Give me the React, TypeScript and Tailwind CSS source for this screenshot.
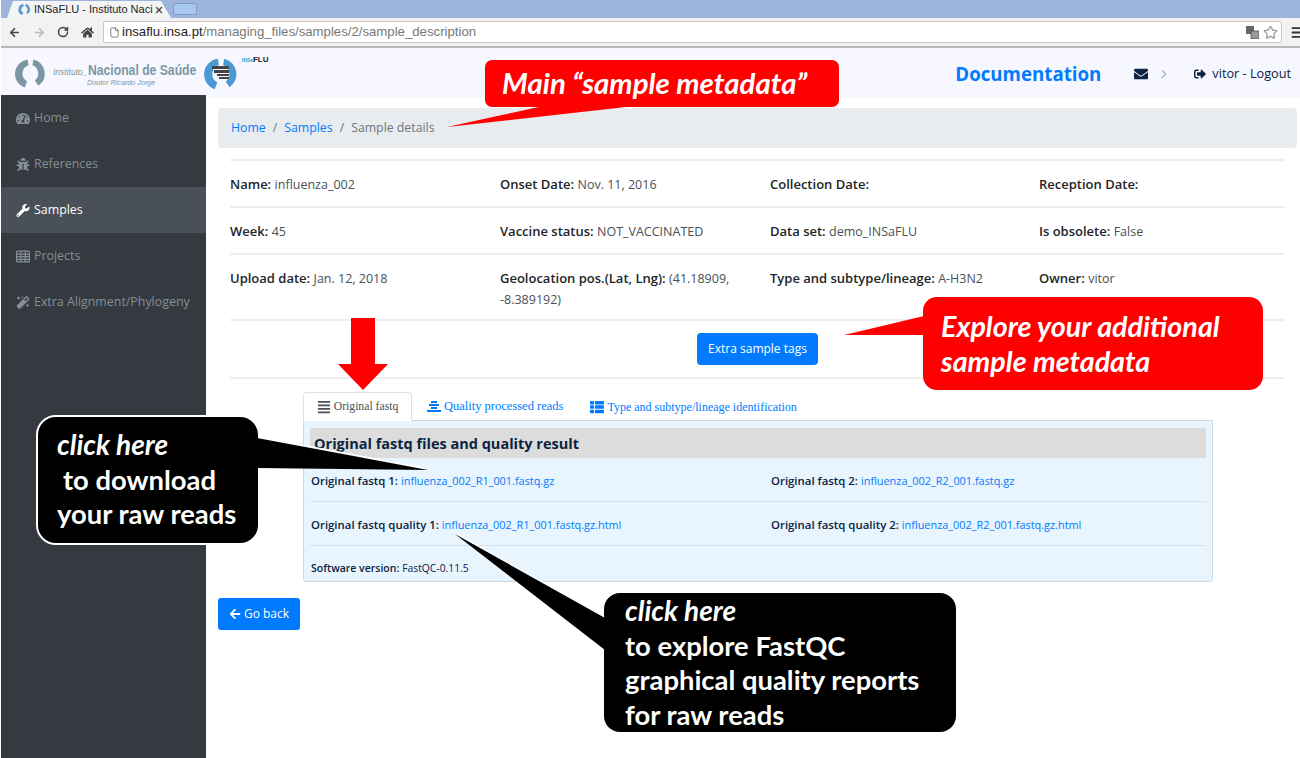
import { ArrowLeft, ArrowRight, RotateCw, File, Star, Menu, X, ChevronRight } from "lucide-react"
import {
  FaAlignJustify,
  FaArrowLeft,
  FaBug,
  FaEnvelope,
  FaHome,
  FaMagic,
  FaSignOutAlt,
  FaTachometerAlt,
  FaThList,
  FaWrench,
} from "react-icons/fa"

function TableIcon({ className }: { size?: number; className?: string }) {
  return (
    <svg viewBox="0 0 14 12" className={className} fill="none" stroke="currentColor" strokeWidth="1.2">
      <rect x="0.6" y="0.6" width="12.8" height="10.8" rx="1" />
      <path d="M0.6 3.6H13.4M0.6 6.2H13.4M0.6 8.8H13.4M4.8 0.6V11.4M9.2 0.6V11.4" />
    </svg>
  )
}

const navItems = [
  { icon: FaTachometerAlt, label: "Home" },
  { icon: FaBug, label: "References" },
  { icon: FaWrench, label: "Samples", active: true },
  { icon: TableIcon, label: "Projects" },
  { icon: FaMagic, label: "Extra Alignment/Phylogeny" },
]

const details = [
  [
    ["Name:", "influenza_002"],
    ["Onset Date:", "Nov. 11, 2016"],
    ["Collection Date:", ""],
    ["Reception Date:", ""],
  ],
  [
    ["Week:", "45"],
    ["Vaccine status:", "NOT_VACCINATED"],
    ["Data set:", "demo_INSaFLU"],
    ["Is obsolete:", "False"],
  ],
  [
    ["Upload date:", "Jan. 12, 2018"],
    ["Geolocation pos.(Lat, Lng):", "(41.18909, -8.389192)"],
    ["Type and subtype/lineage:", "A-H3N2"],
    ["Owner:", "vitor"],
  ],
]

function RingLogo({ color, className }: { color: string; className: string }) {
  return (
    <svg viewBox="0 0 34 34" className={className}>
      <path
        d="M20 2.5 A15 15 0 0 1 25 29.5 L21.5 24 A9 9 0 0 0 19 8.5 Z M14 2.5 L15 8.5 A9 9 0 0 0 13.5 25 L11 31.5 A15 15 0 0 1 14 2.5 Z"
        fill={color}
      />
    </svg>
  )
}

function BrowserChrome() {
  return (
    <div className="h-[48px] shrink-0 flex flex-col font-['Liberation_Sans',sans-serif]">
      <div className="h-[18px] bg-[#9db5dd] flex items-end pl-[6px]">
        <div className="w-[164px] h-[17px] bg-[#f4f4f4] [clip-path:polygon(0_100%,6px_0,154px_0,164px_100%)] flex items-center pl-[11px] pr-[7px] text-[11px] text-[#222]">
          <RingLogo color="#5a9bd5" className="w-[13px] h-[13px] mr-[3px] shrink-0" />
          <span className="whitespace-nowrap">INSaFLU - Instituto Naci</span>
          <X size={10} strokeWidth={3} className="text-[#444] shrink-0 ml-auto" />
        </div>
        <div className="ml-[2px] mb-[3px] w-[24px] h-[12px] bg-[#a8c8f0] border border-[#7f9cc8] rounded-t-[3px]" />
      </div>
      <div className="h-[30px] bg-[#f2f2f2] border-b-2 border-[#b9b9b9] flex items-center pl-[7px]">
        <ArrowLeft size={13} strokeWidth={3} className="text-[#444]" />
        <ArrowRight size={13} strokeWidth={3} className="text-[#bbb] ml-[12px]" />
        <RotateCw size={12} strokeWidth={3} className="text-[#444] ml-[11px]" />
        <FaHome size={13} className="text-[#444] ml-[12px]" />
        <div className="ml-[9px] flex-1 h-[22px] bg-white border border-[#c6c6c6] rounded-[2px] flex items-center pl-[5px] pr-[3px] text-[13.2px]">
          <File size={11} className="text-[#777] mr-[2px]" />
          <span className="text-[#222]">insaflu.insa.pt</span>
          <span className="text-[#777]">/managing_files/samples/2/sample_description</span>
          <div className="ml-auto flex items-center gap-[4px]">
            <svg viewBox="0 0 13 13" className="w-[13px] h-[13px]">
              <rect x="0" y="0" width="8" height="8" fill="#666" />
              <rect x="5" y="5" width="8" height="8" fill="#999" stroke="#444" strokeWidth="0.7" />
            </svg>
            <Star size={15} className="text-[#999]" />
          </div>
        </div>
        <Menu size={15} strokeWidth={3} className="text-[#333] ml-[8px] -mr-[5px] shrink-0" />
      </div>
    </div>
  )
}

function SiteHeader() {
  return (
    <div className="h-[50px] shrink-0 bg-[#f6f7ff] flex pl-[13px] pr-[9px] font-['Open_Sans',sans-serif]">
      <RingLogo color="#7c97a3" className="w-[33px] h-[33px] mt-[9px]" />
      <div className="ml-[6px] mt-[14px] w-[143px] text-[#7c97a3] font-['Liberation_Sans',sans-serif] leading-none">
        <div className="whitespace-nowrap">
          <span className="text-[8.5px] italic">Instituto_</span>
          <span className="inline-block origin-left scale-x-[0.87] text-[14px] font-bold">Nacional de Saúde</span>
        </div>
        <div className="text-[7.2px] italic ml-[34px] mt-[1px]">Doutor Ricardo Jorge</div>
      </div>
      <div className="relative ml-[7px] mt-[8px] w-[36px] h-[36px]">
        <RingLogo color="#4b9ad4" className="w-[36px] h-[36px]" />
        <div className="absolute left-[9px] top-[10px] flex flex-col items-end gap-[1px]">
          <div className="w-[17px] h-[3px] bg-[#444]" />
          <div className="w-[15px] h-[3px] bg-[#444]" />
          <div className="w-[12px] h-[2px] bg-[#444]" />
          <div className="w-[10px] h-[2px] bg-[#444]" />
        </div>
      </div>
      <div className="mt-[6px] text-[8px] font-bold text-[#222] whitespace-nowrap font-['Liberation_Sans',sans-serif]">
        <span className="text-[#4b9ad4] text-[5px]">_INSa</span>FLU
      </div>
      <div className="ml-auto flex items-center pt-[2px] text-[#0c2340]">
        <span className="text-[18.7px] font-bold text-[#007bff]">Documentation</span>
        <FaEnvelope size={14} className="ml-[33px]" />
        <ChevronRight size={14} className="ml-[9px] text-[#adb5bd]" />
        <FaSignOutAlt size={12} className="ml-[23px]" />
        <span className="ml-[6px] text-[12.7px]">vitor - Logout</span>
      </div>
    </div>
  )
}

function Sidebar() {
  return (
    <div className="w-[205px] shrink-0 -mt-[3px] bg-[#343a40] relative z-10">
      {navItems.map((item) => (
        <div
          key={item.label}
          className={
            item.active
              ? "h-[46px] flex items-center pl-[15px] pt-[1px] text-[12.4px] bg-[#495057] text-white"
              : "h-[46px] flex items-center pl-[15px] pt-[1px] text-[12.4px] text-[#868e96]"
          }
        >
          <item.icon size={13} className="w-[14px] h-[13px] shrink-0" />
          <span className="ml-[4px] whitespace-nowrap">{item.label}</span>
        </div>
      ))}
    </div>
  )
}

function DetailRows() {
  return (
    <div className="mt-[11px] ml-[24px] mr-[15px] text-[13px] text-[#495057]">
      {details.map((row, i) => (
        <div
          key={i}
          className={
            i === 2
              ? "grid grid-cols-[270px_270px_269px_1fr] border-t-2 border-[#eeeeee] pt-[13px] pb-[9px]"
              : "grid grid-cols-[270px_270px_269px_1fr] border-t-2 border-[#eeeeee] pt-[13px] pb-[11px]"
          }
        >
          {row.map(([label, value]) => (
            <div key={label} className="pr-[20px] leading-[20px]">
              <span className="font-semibold text-[#212529]">{label}</span> <span className="text-[12.5px]">{value}</span>
            </div>
          ))}
        </div>
      ))}
      <div className="border-t-2 border-b-2 border-[#eeeeee] h-[60px] pt-[12px] flex justify-center">
        <button className="h-[32px] w-[121px] rounded-[4px] bg-[#007bff] text-white text-[12px]">Extra sample tags</button>
      </div>
    </div>
  )
}

function QualityIcon() {
  return (
    <svg viewBox="0 0 14 12" className="w-[14px] h-[12px]" fill="#007bff">
      <rect x="4" y="0" width="6" height="2" />
      <rect x="2" y="3" width="10" height="2" />
      <rect x="4" y="6" width="6" height="2" />
      <rect x="0" y="9" width="14" height="2" />
    </svg>
  )
}

function FastqPanel() {
  const link = "text-[#007bff] text-[10.9px]"
  return (
    <div className="ml-[97px] mt-[13px] w-[910px]">
      <div className="h-[29px] flex font-['Liberation_Serif',serif] text-[12px] text-[#007bff] relative z-[1] -mb-px">
        <div className="w-[109px] border border-[#dee2e6] border-b-white bg-white rounded-t-[4px] flex items-center justify-center gap-[3px] text-[#495057] text-[11.7px]">
          <FaAlignJustify size={14} />
          <span>Original fastq</span>
        </div>
        <div className="ml-[15px] flex items-center gap-[3px]">
          <QualityIcon />
          <span className="text-[12.5px]">Quality processed reads</span>
        </div>
        <div className="ml-[27px] flex items-center gap-[3px]">
          <FaThList size={14} />
          <span>Type and subtype/lineage identification</span>
        </div>
      </div>
      <div className="h-[162px] border border-[#c6d8e6] rounded-b-[3px] bg-[#e8f4fe] px-[6px] pt-[7px] text-[11.4px] text-[#0c2340]">
        <div className="h-[30px] bg-[#dcdcdc] flex items-center pl-[4px] pt-[1px] text-[14.5px] font-bold">
          Original fastq files and quality result
        </div>
        <div className="grid grid-cols-[460px_1fr] h-[44px] pt-[14px] pl-[1px] border-b border-[#d3e0ea]">
          <div>
            <span className="font-semibold">Original fastq 1:</span> <span className={link}>influenza_002_R1_001.fastq.gz</span>
          </div>
          <div>
            <span className="font-semibold">Original fastq 2:</span> <span className={link}>influenza_002_R2_001.fastq.gz</span>
          </div>
        </div>
        <div className="grid grid-cols-[460px_1fr] h-[44px] pt-[14px] pl-[1px] border-b border-[#d3e0ea]">
          <div>
            <span className="font-semibold">Original fastq quality 1:</span> <span className={link}>influenza_002_R1_001.fastq.gz.html</span>
          </div>
          <div>
            <span className="font-semibold">Original fastq quality 2:</span> <span className={link}>influenza_002_R2_001.fastq.gz.html</span>
          </div>
        </div>
        <div className="pt-[13px] pl-[1px]">
          <span className="font-semibold text-[10.5px]">Software version:</span> <span className="text-[10.3px]">FastQC-0.11.5</span>
        </div>
      </div>
    </div>
  )
}

function Callouts() {
  const text = "font-['Lato',sans-serif] font-bold text-white"
  return (
    <>
      <div className={`absolute left-[485px] top-[60px] w-[354px] h-[47px] z-20 bg-[#ff0000] rounded-[7px] flex items-center pl-[17px] text-[29.4px] italic ${text}`}>
        Main “sample metadata”
      </div>
      <div className={`absolute left-[923px] top-[297px] w-[340px] h-[93px] z-20 bg-[#ff0000] rounded-[14px] pl-[18px] pt-[12px] text-[28.7px] leading-[35px] italic ${text}`}>
        Explore your additional
        <br />
        sample metadata
      </div>
      <div className={`absolute left-[36px] top-[415px] w-[224px] h-[130px] z-20 bg-black border-2 border-white rounded-[20px] pl-[19px] pt-[10px] text-[27.4px] leading-[34.7px] ${text}`}>
        <span className="italic text-[28px]">click here</span>
        <br />
        <span className="ml-[6px]">to download</span>
        <br />
        your raw reads
      </div>
      <div className={`absolute left-[604px] top-[593px] w-[352px] h-[139px] z-20 bg-black rounded-[16px] pl-[21px] text-[27.4px] leading-[34.7px] ${text}`}>
        <span className="italic text-[28px]">click here</span>
        <br />
        to explore FastQC
        <br />
        graphical quality reports
        <br />
        for raw reads
      </div>
      <svg viewBox="0 0 1300 758" className="absolute left-0 top-0 w-[1300px] h-[758px] z-30 pointer-events-none">
        <polygon points="543,106 447,127 635,106" fill="#ff0000" />
        <polygon points="924,316 844,335 924,335" fill="#ff0000" />
        <polygon points="351,318 375,318 375,364 388,364 363,390 338,364 351,364" fill="#ff0000" />
        <polyline points="259,437 428,469" fill="none" stroke="#ffffff" strokeWidth="1.5" />
        <polygon points="257,438 428,470 257,468" fill="#000000" />
        <polyline points="604,617 455,533" fill="none" stroke="#ffffff" strokeWidth="1.5" />
        <polygon points="605,618 455,534 605,650" fill="#000000" />
      </svg>
    </>
  )
}

export default function App() {
  return (
    <div className="relative w-[1300px] h-[758px] overflow-hidden bg-white pl-px flex flex-col font-['Open_Sans',sans-serif]">
      <BrowserChrome />
      <SiteHeader />
      <div className="flex flex-1 min-h-0">
        <Sidebar />
        <div className="flex-1 min-w-0">
          <div className="mt-[10px] ml-[12px] mr-[3px] h-[40px] rounded-[4px] bg-[#e9ecef] flex items-center pl-[13px] pt-[1px] text-[12.3px] text-[#6c757d]">
            <span className="text-[#007bff]">Home</span>
            <span className="mx-[7px]">/</span>
            <span className="text-[#007bff]">Samples</span>
            <span className="mx-[7px]">/</span>
            <span>Sample details</span>
          </div>
          <DetailRows />
          <FastqPanel />
          <button className="mt-[16px] ml-[12px] h-[32px] w-[82px] rounded-[3px] bg-[#007bff] text-white text-[12px] flex items-center justify-center gap-[3px]">
            <FaArrowLeft size={12} />
            Go back
          </button>
        </div>
      </div>
      <Callouts />
    </div>
  )
}
